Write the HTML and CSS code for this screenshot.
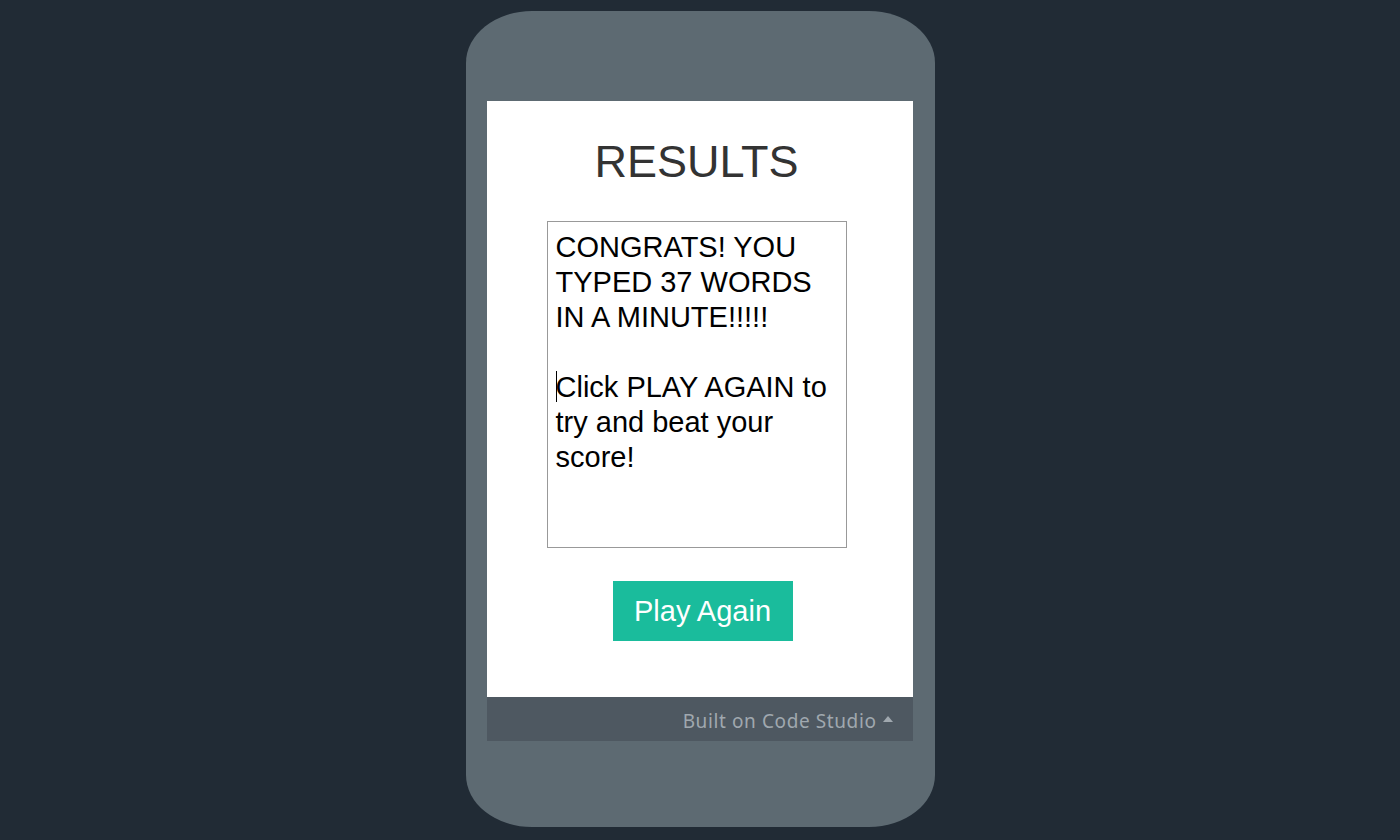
FILE: index.html
```html
<!DOCTYPE html>
<html>
<head>
<meta charset="utf-8">
<link rel="stylesheet" href="styles.css">
</head>
<body>
<div class="phone">
  <div class="screen">
    <h1 class="title">RESULTS</h1>
    <div class="textbox">
      <p class="para">CONGRATS! YOU TYPED 37 WORDS IN A MINUTE!!!!!</p>
      <p class="para gap"><span class="caret"></span>Click PLAY AGAIN to try and beat your score!</p>
    </div>
    <button class="play">Play Again</button>
  </div>
  <div class="footer">
    <span class="built">Built on Code Studio</span>
    <span class="tri"></span>
  </div>
</div>
</body>
</html>
```
FILE: styles.css
```css
html, body {
  margin: 0;
  padding: 0;
  background: #212b35;
  height: 840px;
  overflow: hidden;
}
body {
  font-family: "Liberation Sans", Arial, sans-serif;
}
.phone {
  width: 469px;
  height: 816px;
  margin: 11px auto 0;
  background: #5d6a72;
  border-radius: 66px / 52px;
  box-sizing: border-box;
  padding: 90px 22px 0 21px;
  display: flex;
  flex-direction: column;
}
.screen {
  height: 596px;
  background: #fff;
  display: flex;
  flex-direction: column;
  align-items: center;
}
.title {
  margin: 36px 6px 0 0;
  font-weight: normal;
  font-size: 45px;
  line-height: 50px;
  color: #333;
}
.textbox {
  margin: 34px 6px 0 0;
  width: 300px;
  height: 327px;
  box-sizing: border-box;
  border: 1px solid #999;
  padding: 8px 8px;
  font-size: 29px;
  line-height: 35px;
  color: #000;
}
.para {
  margin: 0;
}
.gap {
  margin-top: 35px;
}
.caret {
  display: inline-block;
  width: 0;
  height: 31px;
  border-left: 1px solid #000;
  vertical-align: -5px;
  margin-right: -1px;
}
.play {
  margin: 33px 0 0 6px;
  width: 180px;
  height: 60px;
  border: none;
  background: #1abc9c;
  color: #fff;
  font-family: "Liberation Sans", Arial, sans-serif;
  font-size: 29px;
  padding: 0;
}
.footer {
  height: 44px;
  background: #4e5861;
  display: flex;
  align-items: center;
  justify-content: flex-end;
  padding-right: 20px;
  gap: 6px;
}
.built {
  font-family: "Noto Sans", sans-serif;
  font-size: 19px;
  color: #a0a8af;
  letter-spacing: 0.6px;
  padding-top: 3px;
}
.tri {
  width: 0;
  height: 0;
  border-left: 5px solid transparent;
  border-right: 5px solid transparent;
  border-bottom: 6px solid #a0a8af;
}
```
